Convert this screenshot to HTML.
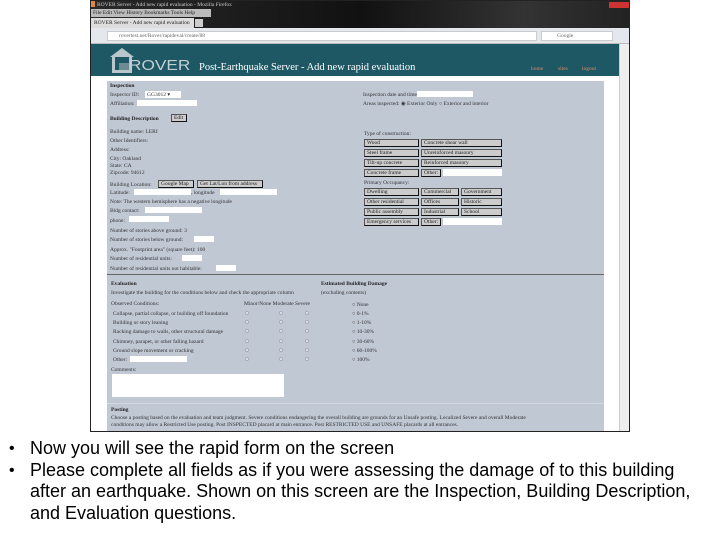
<!DOCTYPE html>
<html><head><meta charset="utf-8"><style>
*{margin:0;padding:0;box-sizing:border-box}
body{width:720px;height:540px;background:#fff;position:relative;overflow:hidden;font-family:"Liberation Sans",sans-serif}
.a{position:absolute}
.s{position:absolute;font-family:"Liberation Serif",serif;font-size:5.5px;color:#333;white-space:nowrap;line-height:6px}
.b{font-weight:bold;color:#222}
.in{position:absolute;background:#fff;height:6px}
.btn{position:absolute;background:#ccc;border:1px solid #555;border-right-color:#111;border-bottom-color:#111;height:8px;font-family:"Liberation Serif",serif;font-size:5.5px;line-height:6px;padding-left:2px;color:#222}
.r{position:absolute;width:4px;height:4px;border-radius:50%;background:#e8ecf0;border:1px solid #aab}
.bul{position:absolute;left:9px;font-size:16px;color:#000;line-height:21.5px}
.t{position:absolute;left:30px;font-size:18px;color:#000;white-space:nowrap;line-height:21.5px}
</style></head><body>
<div class="a" style="left:90px;top:0;width:540px;height:432px;border:1px solid #222;background:#fff;overflow:hidden">
 <div class="a" style="left:0;top:0;width:540px;height:27px;background:linear-gradient(90deg,#2a2a2a,#111 50%,#333 80%,#222)"></div>
 <div class="s" style="left:6px;top:1px;color:#ccc">ROVER Server - Add new rapid evaluation - Mozilla Firefox</div>
 <div class="a" style="left:0;top:0;width:4px;height:6px;background:#d84"></div>
 <div class="a" style="left:0;top:8px;width:120px;height:8px;background:#bbb"></div>
 <div class="s" style="left:2px;top:9px;color:#222">File  Edit  View  History  Bookmarks  Tools  Help</div>
 <div class="a" style="left:0;top:17px;width:103px;height:10px;background:#ddd"></div>
 <div class="s" style="left:3px;top:19px;color:#222">ROVER Server - Add new rapid evaluation</div>
 <div class="a" style="left:104px;top:18px;width:8px;height:8px;background:#ccc"></div>
 <div class="a" style="left:518px;top:1px;width:20px;height:6px;background:#c33"></div>
 <div class="a" style="left:0;top:27px;width:540px;height:16px;background:#e4e8ec;border-bottom:1px solid #bbb"></div>
 <div class="a" style="left:16px;top:30px;width:430px;height:10px;background:#fff;border:1px solid #ccc"></div>
 <div class="s" style="left:28px;top:32px;color:#666">rovertest.net/Rover/rapideval/create/88</div>
 <div class="a" style="left:450px;top:30px;width:72px;height:10px;background:#fff;border:1px solid #ccc"></div>
 <div class="s" style="left:466px;top:32px;color:#666">Google</div>
 <div class="a" style="left:0;top:43px;width:528px;height:32px;background:#1e5865"></div>
 <div class="a" style="left:528px;top:43px;width:12px;height:389px;background:#eee;border-left:1px solid #ccc"></div>
 <div class="a" style="left:21px;top:56px;width:20px;height:16px;border:3px solid #b9c7cc;border-top:none"></div>
 <div class="a" style="left:19px;top:47px;width:0;height:0;border-left:12px solid transparent;border-right:12px solid transparent;border-bottom:9px solid #b9c7cc"></div>
 <div class="a" style="left:28px;top:62px;width:10px;height:7px;background:#6e8a92"></div>
 <div class="a" style="left:38px;top:56px;font-size:15px;color:#c3cfd3;line-height:18px;transform:scaleX(1.15);transform-origin:left">ROVER</div>
 <div class="a" style="left:108px;top:61px;font-family:'Liberation Serif',serif;font-size:10.5px;color:#fff;white-space:nowrap">Post-Earthquake Server - Add new rapid evaluation</div>
 <div class="s" style="left:440px;top:65px;color:#e08860">home</div>
 <div class="s" style="left:467px;top:65px;color:#e08860">sites</div>
 <div class="s" style="left:491px;top:65px;color:#e08860">logout</div>
 <div class="a" style="left:16px;top:80px;width:497px;height:352px;background:#c0c8d4"></div>
 <div class="a" style="left:16px;top:273px;width:497px;height:1px;background:#666"></div>
 <div class="a" style="left:16px;top:402px;width:497px;height:1px;background:#d4d9e0"></div>
 <div class="a" style="left:0;top:431px;width:540px;height:1px;background:#000"></div>
</div>
<div class="s b" style="left:110px;top:83px">Inspection</div>
<div class="s" style="left:110px;top:92px">Inspector ID:</div><div class="in" style="left:145px;top:91px;width:36px;height:7px"></div><div class="s" style="left:147px;top:92px">GG3012 ▾</div>
<div class="s" style="left:110px;top:101px">Affiliation:</div><div class="in" style="left:137px;top:100px;width:60px"></div>
<div class="s" style="left:363px;top:92px">Inspection date and time:</div><div class="in" style="left:417px;top:91px;width:56px"></div>
<div class="s" style="left:363px;top:101px">Areas inspected: ◉ Exterior Only ○ Exterior and interior</div>
<div class="s b" style="left:110px;top:116px">Building Description</div><div class="btn" style="left:171px;top:114px;width:16px">Edit</div>
<div class="s" style="left:110px;top:129px">Building name: LERI</div>
<div class="s" style="left:110px;top:138px">Other Identifiers:</div>
<div class="s" style="left:110px;top:147px">Address:</div>
<div class="s" style="left:110px;top:156px">City: Oakland</div>
<div class="s" style="left:110px;top:163px">State: CA</div>
<div class="s" style="left:110px;top:170px">Zipcode: 94612</div>
<div class="s" style="left:110px;top:182px">Building Location:</div><div class="btn" style="left:158px;top:180px;width:36px">Google Map</div><div class="btn" style="left:197px;top:180px;width:66px">Get Lat/Lon from address</div>
<div class="s" style="left:110px;top:190px">Latitude:</div><div class="in" style="left:134px;top:189px;width:57px"></div><div class="s" style="left:191px;top:190px">, longitude</div><div class="in" style="left:220px;top:189px;width:57px"></div>
<div class="s" style="left:110px;top:199px">Note: The western hemisphere has a negative longitude</div>
<div class="s" style="left:110px;top:208px">Bldg contact:</div><div class="in" style="left:145px;top:207px;width:57px"></div>
<div class="s" style="left:110px;top:218px">phone:</div><div class="in" style="left:129px;top:216px;width:40px"></div>
<div class="s" style="left:110px;top:228px">Number of stories above ground: 3</div>
<div class="s" style="left:110px;top:237px">Number of stories below ground:</div><div class="in" style="left:194px;top:236px;width:20px"></div>
<div class="s" style="left:110px;top:247px">Approx. "Footprint area" (square feet): 100</div>
<div class="s" style="left:110px;top:256px">Number of residential units:</div><div class="in" style="left:182px;top:255px;width:20px"></div>
<div class="s" style="left:110px;top:266px">Number of residential units not habitable:</div><div class="in" style="left:216px;top:265px;width:20px"></div>
<div class="s" style="left:364px;top:131px">Type of construction:</div>
<div class="btn" style="left:364px;top:139px;width:55px">Wood</div><div class="btn" style="left:421px;top:139px;width:81px">Concrete shear wall</div>
<div class="btn" style="left:364px;top:149px;width:55px">Steel frame</div><div class="btn" style="left:421px;top:149px;width:81px">Unreinforced masonry</div>
<div class="btn" style="left:364px;top:159px;width:55px">Tilt-up concrete</div><div class="btn" style="left:421px;top:159px;width:81px">Reinforced masonry</div>
<div class="btn" style="left:364px;top:169px;width:55px">Concrete frame</div><div class="btn" style="left:421px;top:169px;width:20px">Other:</div><div class="in" style="left:443px;top:169px;width:59px;height:7px"></div>
<div class="s" style="left:364px;top:180px">Primary Occupancy:</div>
<div class="btn" style="left:364px;top:188px;width:55px">Dwelling</div><div class="btn" style="left:421px;top:188px;width:38px">Commercial</div><div class="btn" style="left:461px;top:188px;width:41px">Government</div>
<div class="btn" style="left:364px;top:198px;width:55px">Other residential</div><div class="btn" style="left:421px;top:198px;width:38px">Offices</div><div class="btn" style="left:461px;top:198px;width:41px">Historic</div>
<div class="btn" style="left:364px;top:208px;width:55px">Public assembly</div><div class="btn" style="left:421px;top:208px;width:38px">Industrial</div><div class="btn" style="left:461px;top:208px;width:41px">School</div>
<div class="btn" style="left:364px;top:218px;width:55px">Emergency services</div><div class="btn" style="left:421px;top:218px;width:20px">Other:</div><div class="in" style="left:443px;top:218px;width:59px;height:7px"></div>
<div class="s b" style="left:111px;top:281px">Evaluation</div>
<div class="s" style="left:111px;top:290px">Investigate the building for the conditions below and check the appropriate column</div>
<div class="s" style="left:111px;top:301px">Observed Conditions:</div>
<div class="s" style="left:244px;top:301px">Minor/None Moderate Severe</div>
<div class="s b" style="left:321px;top:281px">Estimated Building Damage</div>
<div class="s" style="left:321px;top:290px">(excluding contents)</div>
<div class="s" style="left:113px;top:311px">Collapse, partial collapse, or building off foundation</div>
<div class="s" style="left:113px;top:320px">Building or story leaning</div>
<div class="s" style="left:113px;top:329px">Racking damage to walls, other structural damage</div>
<div class="s" style="left:113px;top:339px">Chimney, parapet, or other falling hazard</div>
<div class="s" style="left:113px;top:348px">Ground slope movement or cracking</div>
<div class="s" style="left:113px;top:357px">Other:</div><div class="in" style="left:130px;top:356px;width:57px"></div>
<div class="r" style="left:245px;top:311px"></div><div class="r" style="left:279px;top:311px"></div><div class="r" style="left:305px;top:311px"></div>
<div class="r" style="left:245px;top:320px"></div><div class="r" style="left:279px;top:320px"></div><div class="r" style="left:305px;top:320px"></div>
<div class="r" style="left:245px;top:329px"></div><div class="r" style="left:279px;top:329px"></div><div class="r" style="left:305px;top:329px"></div>
<div class="r" style="left:245px;top:339px"></div><div class="r" style="left:279px;top:339px"></div><div class="r" style="left:305px;top:339px"></div>
<div class="r" style="left:245px;top:348px"></div><div class="r" style="left:279px;top:348px"></div><div class="r" style="left:305px;top:348px"></div>
<div class="r" style="left:245px;top:357px"></div><div class="r" style="left:279px;top:357px"></div><div class="r" style="left:305px;top:357px"></div>
<div class="s" style="left:352px;top:302px">○ None</div>
<div class="s" style="left:352px;top:311px">○ 0-1%</div>
<div class="s" style="left:352px;top:320px">○ 1-10%</div>
<div class="s" style="left:352px;top:329px">○ 10-30%</div>
<div class="s" style="left:352px;top:339px">○ 30-60%</div>
<div class="s" style="left:352px;top:348px">○ 60-100%</div>
<div class="s" style="left:352px;top:357px">○ 100%</div>
<div class="s" style="left:111px;top:367px">Comments:</div>
<div class="in" style="left:112px;top:374px;width:172px;height:23px"></div>
<div class="s b" style="left:111px;top:407px">Posting</div>
<div class="s" style="left:111px;top:415px">Choose a posting based on the evaluation and team judgment. Severe conditions endangering the overall building are grounds for an Unsafe posting. Localized Severe and overall Moderate</div>
<div class="s" style="left:111px;top:422px">conditions may allow a Restricted Use posting. Post INSPECTED placard at main entrance. Post RESTRICTED USE and UNSAFE placards at all entrances.</div>
<div class="bul" style="top:438px">•</div><div class="t" style="top:438px">Now you will see the rapid form on the screen</div>
<div class="bul" style="top:460px">•</div><div class="t" style="top:460px">Please complete all fields as if you were assessing the damage of to this building</div>
<div class="t" style="top:481px">after an earthquake. Shown on this screen are the Inspection, Building Description,</div>
<div class="t" style="top:503px">and Evaluation questions.</div>
</body></html>
